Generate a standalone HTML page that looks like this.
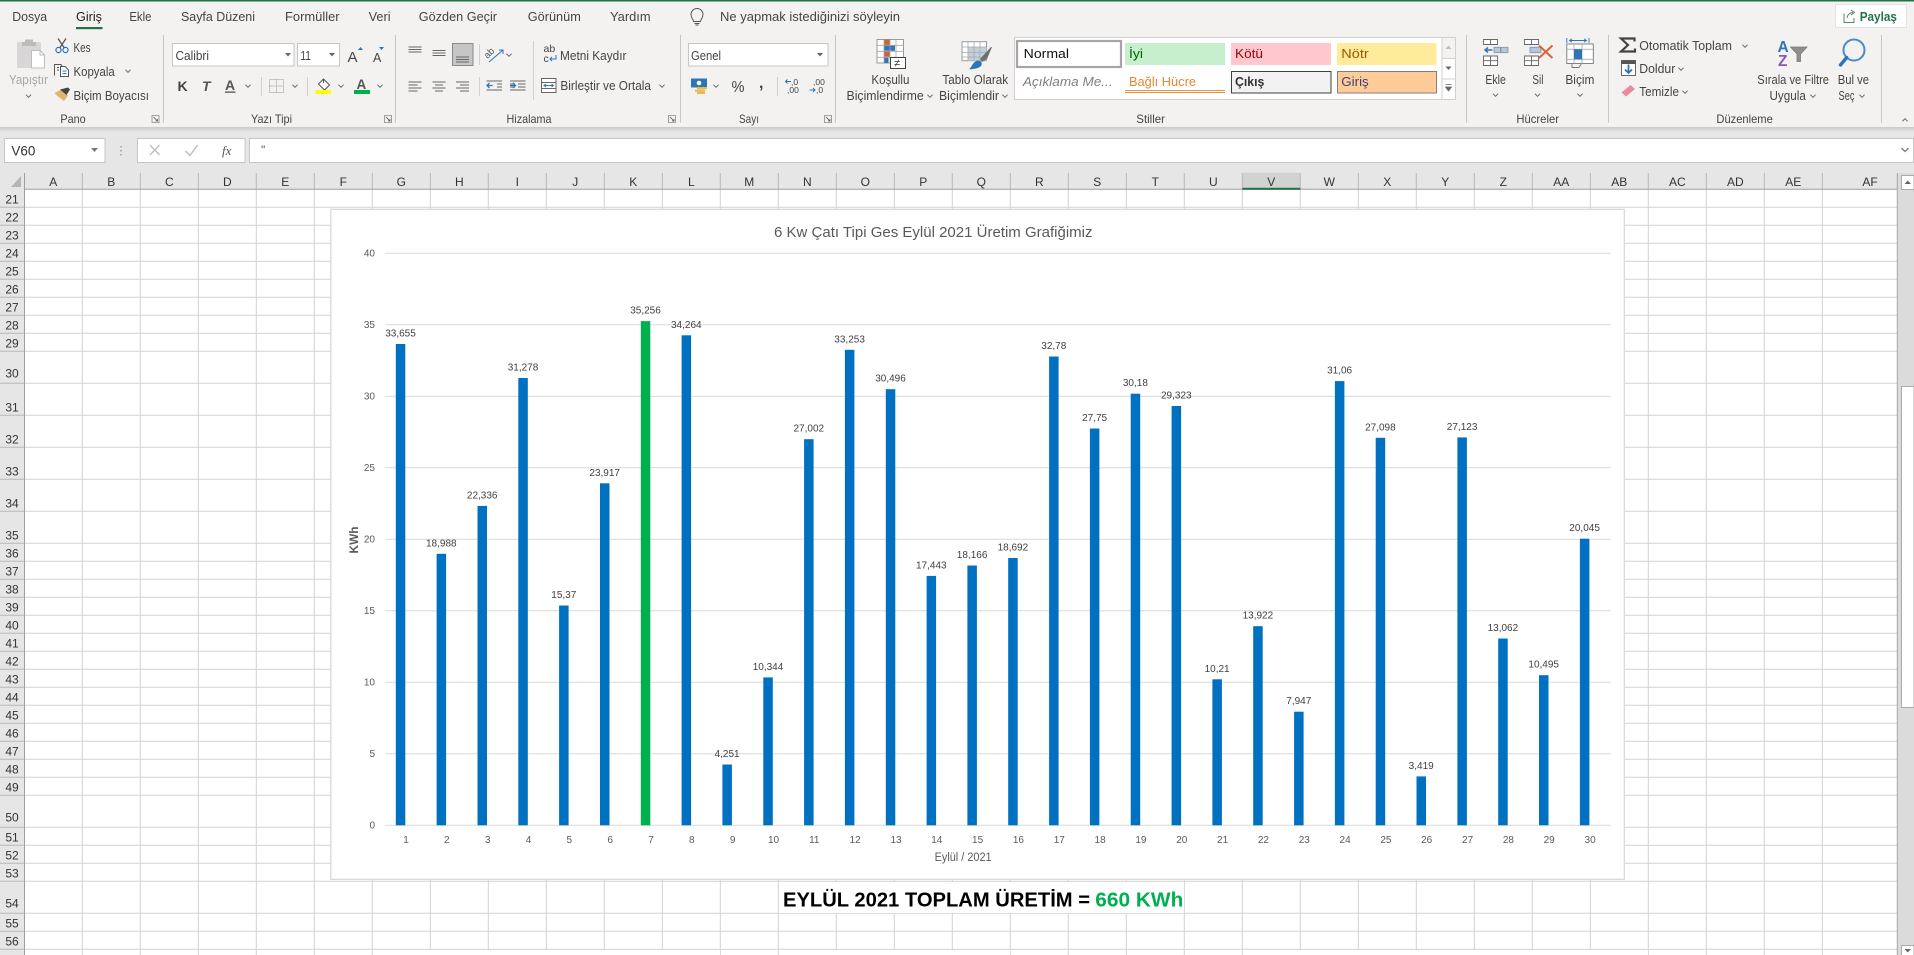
<!DOCTYPE html>
<html lang="tr">
<head>
<meta charset="utf-8">
<title>Excel</title>
<style>
html,body{margin:0;padding:0;width:1914px;height:955px;overflow:hidden;background:#fff}
svg{display:block}
text{font-family:"Liberation Sans",sans-serif;fill:#444;font-size:13px}
.h{font-size:12px;fill:#333}
.c{font-size:12px;fill:#333;text-anchor:middle}
.r{font-size:12px;fill:#333;text-anchor:middle}
.d{font-size:10px;fill:#404040;text-anchor:middle}
.y{font-size:10px;fill:#595959;text-anchor:end}
.x{font-size:10px;fill:#595959;text-anchor:middle}
</style>
</head>
<body>
<svg xmlns="http://www.w3.org/2000/svg" width="1914" height="955" viewBox="0 0 1914 955">
<defs>
<path id="ch" d="M-2.6-1.3 0 1.3 2.6-1.3" fill="none" stroke="#666" stroke-width="1"/>
<g id="dl"><path d="M-3.5-3.5H3.5V3.5H-3.5Z" fill="none" stroke="#8a8a8a" stroke-width=".8"/><path d="M-2-2 2 2M2 0V2H0" fill="none" stroke="#555" stroke-width=".8"/></g>
<linearGradient id="sh" x1="0" y1="0" x2="0" y2="1"><stop offset="0" stop-color="#c9c9c9"/><stop offset="1" stop-color="#e6e6e6"/></linearGradient>
</defs>

<!-- backgrounds -->
<rect width="1914" height="955" fill="#fff"/>
<rect width="1914" height="173" fill="#e6e6e6"/>
<rect width="1914" height="127" fill="#f3f2f1"/>
<rect y="127" width="1914" height="5" fill="url(#sh)"/>
<rect width="1914" height="1.5" fill="#217346"/>

<!-- tabs -->
<g>
<text x="12.2" y="21" textLength="35" lengthAdjust="spacingAndGlyphs">Dosya</text>
<text x="76" y="21" textLength="26" lengthAdjust="spacingAndGlyphs" style="fill:#222">Giriş</text>
<rect x="76" y="27" width="26.500" height="2.200" fill="#217346"/>
<text x="129.4" y="21" textLength="22" lengthAdjust="spacingAndGlyphs">Ekle</text>
<text x="181" y="21" textLength="74" lengthAdjust="spacingAndGlyphs">Sayfa Düzeni</text>
<text x="285" y="21" textLength="54.600" lengthAdjust="spacingAndGlyphs">Formüller</text>
<text x="368.6" y="21" textLength="22" lengthAdjust="spacingAndGlyphs">Veri</text>
<text x="418.8" y="21" textLength="78.200" lengthAdjust="spacingAndGlyphs">Gözden Geçir</text>
<text x="527.8" y="21" textLength="53" lengthAdjust="spacingAndGlyphs">Görünüm</text>
<text x="610" y="21" textLength="40.600" lengthAdjust="spacingAndGlyphs">Yardım</text>
<path d="M693.500 21.500c-.3-2.500-2.500-3.500-2.500-7a6 6 0 0 1 12 0c0 3.500-2.200 4.500-2.500 7ZM694.500 23.500h5M695.500 25h3" fill="none" stroke="#555" stroke-width="1"/>
<text x="720" y="21" textLength="180" lengthAdjust="spacingAndGlyphs">Ne yapmak istediğinizi söyleyin</text>
<rect x="1835.500" y="4.500" width="71" height="23" fill="#fff" stroke="#e3e3e3"/>
<path d="M1844 13.500V22.500H1854V18M1847 18c.5-3.500 3-5.500 6-5.500M1851 10l3.500 2.500-3.500 2.500" fill="none" stroke="#5f7f6c" stroke-width="1"/>
<text x="1859.700" y="21" textLength="37.200" lengthAdjust="spacingAndGlyphs" style="fill:#217346;font-weight:bold">Paylaş</text>
</g>

<!-- separators -->
<path d="M163.500 35V122.700M395.500 35V122.700M680.500 35V122.700M835.500 35V122.700M1466.500 35V122.700M1608.500 35V122.700M1881.500 35V122.700" stroke="#c8c6c4" stroke-width="1"/>
<path d="M261.500 77V96M307.500 77V96M479.500 44V65M479.500 77V96M533.500 41V100M777.500 77V96" stroke="#d2d0ce" stroke-width="1"/>

<!-- group labels -->
<g>
<text x="60.4" y="123" textLength="25.300" lengthAdjust="spacingAndGlyphs" style="font-size:12px">Pano</text>
<text x="251" y="123" textLength="41" lengthAdjust="spacingAndGlyphs" style="font-size:12px">Yazı Tipi</text>
<text x="506.500" y="123" textLength="45" lengthAdjust="spacingAndGlyphs" style="font-size:12px">Hizalama</text>
<text x="739" y="123" textLength="20" lengthAdjust="spacingAndGlyphs" style="font-size:12px">Sayı</text>
<text x="1136.300" y="123" textLength="28.700" lengthAdjust="spacingAndGlyphs" style="font-size:12px">Stiller</text>
<text x="1516.400" y="123" textLength="42.600" lengthAdjust="spacingAndGlyphs" style="font-size:12px">Hücreler</text>
<text x="1716.400" y="123" textLength="56.400" lengthAdjust="spacingAndGlyphs" style="font-size:12px">Düzenleme</text>
<use href="#dl" x="155.500" y="119"/><use href="#dl" x="388" y="119"/><use href="#dl" x="672" y="119"/><use href="#dl" x="828" y="119"/>
<use href="#ch" x="1905" y="120" transform="rotate(180 1905 120)"/>
</g>

<!-- clipboard group -->
<g>
<rect x="17" y="42" width="24" height="26" rx="1" fill="#d8d6d6"/>
<path d="M25 42V39.500H33V42H36V46H22V42Z" fill="#bdbbbb"/>
<path d="M31.500 50.500H40L44.500 55V68H31.500Z" fill="#fff" stroke="#bdbdbd"/>
<path d="M40 50.500V55H44.500" fill="none" stroke="#bdbdbd"/>
<text x="9" y="84" textLength="39" lengthAdjust="spacingAndGlyphs" style="fill:#a6a6a6">Yapıştır</text>
<use href="#ch" x="28.500" y="96"/>
<circle cx="58.500" cy="50" r="2.600" fill="none" stroke="#2e75b6" stroke-width="1.200"/>
<circle cx="65.500" cy="50" r="2.600" fill="none" stroke="#2e75b6" stroke-width="1.200"/>
<path d="M59.800 47.800 66 38.500M64.200 47.800 58 38.500" stroke="#555" stroke-width="1.300" fill="none"/>
<text x="73.500" y="52" textLength="17" lengthAdjust="spacingAndGlyphs">Kes</text>
<path d="M54.500 75.500V64.500H61L62 66M57 67.500H59M57 70H59" fill="none" stroke="#555"/>
<path d="M60.500 66.500H65L68.500 70V76.500H60.500Z" fill="#fff" stroke="#555"/>
<path d="M62.500 71H66.500M62.500 73.500H66.500" stroke="#2e75b6"/>
<text x="73.500" y="76" textLength="41.200" lengthAdjust="spacingAndGlyphs">Kopyala</text>
<use href="#ch" x="128" y="71"/>
<path d="M54.500 93 62 89 68 95.500 64 101C60 98 57 96 54.500 93Z" fill="#e0b46c"/>
<path d="M60 89.500 68 87.500 70 89.500 66.500 95Z" fill="#444"/>
<text x="73.500" y="100" textLength="75.500" lengthAdjust="spacingAndGlyphs">Biçim Boyacısı</text>
</g>

<!-- font group -->
<g>
<rect x="172.500" y="43.500" width="121.500" height="22.500" fill="#fff" stroke="#c6c6c6"/>
<text x="175.500" y="60" textLength="33.500" lengthAdjust="spacingAndGlyphs">Calibri</text>
<path d="M285 53H291L288 56.500Z" fill="#666"/>
<rect x="297.500" y="43.500" width="42" height="22.500" fill="#fff" stroke="#c6c6c6"/>
<text x="300.400" y="60" textLength="10.600" lengthAdjust="spacingAndGlyphs">11</text>
<path d="M329 53H335L332 56.500Z" fill="#666"/>
<text x="347.500" y="62" style="font-size:15px">A</text>
<path d="M358 50H363L360.500 47Z" fill="#2e75b6"/>
<text x="373" y="62" style="font-size:12.500px">A</text>
<path d="M379 47H384L381.500 50Z" fill="#2e75b6"/>
<text x="177.500" y="91" style="font-weight:bold;font-size:14px">K</text>
<text x="202" y="91" style="font-style:italic;font-weight:bold;font-size:14px;fill:#555">T</text>
<text x="225" y="90" style="font-size:14px;font-weight:bold;fill:#555">A</text>
<rect x="225" y="91.500" width="10.500" height="1.200" fill="#444"/>
<use href="#ch" x="248" y="86"/>
<rect x="269.500" y="79.500" width="14" height="13" fill="none" stroke="#9a9a9a" stroke-dasharray="1 1"/>
<path d="M276.500 79.500V92.500M269.500 86H283.500" stroke="#9a9a9a" stroke-dasharray="1 1"/>
<use href="#ch" x="295" y="86"/>
<path d="M323.500 79 329.500 85 324.500 90 318.500 84Z" fill="#fff" stroke="#555"/>
<path d="M323.500 79V83" stroke="#555"/>
<rect x="315.500" y="90" width="15.500" height="4" fill="#ffff00"/>
<use href="#ch" x="341" y="86"/>
<text x="356.500" y="89" style="font-size:13.500px;font-weight:bold;fill:#555">A</text>
<rect x="354" y="90" width="16" height="4" fill="#00b050"/>
<use href="#ch" x="380" y="86"/>
</g>

<!-- alignment group -->
<g>
<rect x="452.500" y="43.500" width="20.500" height="22" fill="#c6c6c6" stroke="#8a8a8a"/>
<path d="M408.500 47H421.500M408.500 49.500H421.500M408.500 52H421.500M432.500 50.500H445.500M432.500 53H445.500M432.500 55.500H445.500M456 57H469M456 59.500H469M456 62H469" stroke="#666" stroke-width="1"/>
<path d="M408.500 82H421.500M408.500 85H417.500M408.500 88H421.500M408.500 91H417.500M432.500 82H445.500M435 85H443M432.500 88H445.500M435 91H443M456 82H469M460 85H469M456 88H469M460 91H469" stroke="#666" stroke-width="1"/>
<text x="0" y="0" transform="translate(487.500 59) rotate(-45)" style="font-size:9.500px;fill:#555">ab</text>
<path d="M489 62 503 50M499 50H503V54" fill="none" stroke="#2e75b6" stroke-width="1"/>
<use href="#ch" x="509" y="55"/>
<path d="M494 81H502M497 84H502M497 87H502M494 90H502M510 81H518M510 84H515M510 87H515M510 90H518M518 81H525.500M518 90H525.500M518 84H525.500M518 87H525.500M486.500 81H494M486.500 90H494" stroke="#666" stroke-width="1"/>
<path d="M492.500 85.500H487M489.500 83 487 85.500 489.500 88" fill="none" stroke="#2e75b6" stroke-width="1.300"/>
<path d="M510 85.500H515.500M513 83 515.500 85.500 513 88" fill="none" stroke="#2e75b6" stroke-width="1.300"/>
<text x="543.500" y="52" style="font-size:10.500px;fill:#444">ab</text>
<text x="543.500" y="62" style="font-size:10.500px;fill:#444">c</text>
<path d="M556 55V59H550M552 57 550 59 552 61" fill="none" stroke="#2e75b6" stroke-width="1"/>
<text x="560" y="60" textLength="66.500" lengthAdjust="spacingAndGlyphs">Metni Kaydır</text>
<rect x="541.500" y="78.500" width="14.500" height="14" fill="#fff" stroke="#666"/>
<path d="M541.500 82.500H556M541.500 88.500H556" stroke="#666"/>
<path d="M544 85.500H553.500M546 84 544 85.500 546 87M551.500 84 553.500 85.500 551.500 87" fill="none" stroke="#2e75b6"/>
<text x="560.400" y="90" textLength="90.600" lengthAdjust="spacingAndGlyphs">Birleştir ve Ortala</text>
<use href="#ch" x="662" y="86"/>
</g>

<!-- number group -->
<g>
<rect x="688.500" y="43.500" width="139.500" height="22.500" fill="#fff" stroke="#c6c6c6"/>
<text x="691" y="60" textLength="30" lengthAdjust="spacingAndGlyphs">Genel</text>
<path d="M817 53H823L820 56.500Z" fill="#666"/>
<rect x="691" y="78.500" width="16" height="9" fill="#2e75b6"/>
<circle cx="699" cy="83" r="2.300" fill="#fff"/>
<rect x="697" y="87" width="10" height="2.200" fill="#e8b84a"/>
<rect x="695" y="89.600" width="10" height="2.200" fill="#e8b84a"/>
<rect x="697" y="92" width="8" height="2" fill="#e8b84a"/>
<use href="#ch" x="716" y="86"/>
<text x="731.500" y="92" textLength="13" lengthAdjust="spacingAndGlyphs" style="font-size:16px">%</text>
<text x="759" y="88" style="font-size:16px;font-weight:bold">,</text>
<text x="791" y="85" style="font-size:8.500px">,0</text>
<text x="787" y="93" style="font-size:8.500px">,00</text>
<path d="M791 81.500H785.500M787.500 79.500 785.500 81.500 787.500 83.500" fill="none" stroke="#2e75b6"/>
<text x="813" y="85" style="font-size:8.500px">,00</text>
<text x="816" y="93" style="font-size:8.500px">,0</text>
<path d="M809.500 90H815M813 88 815 90 813 92" fill="none" stroke="#2e75b6"/>
</g>

<!-- conditional / table format -->
<g>
<rect x="877" y="39.500" width="26.500" height="23.500" fill="#fff" stroke="#9a9a9a"/>
<rect x="884" y="39.500" width="6" height="5.500" fill="#d0603b"/>
<rect x="884" y="45.300" width="11" height="5.500" fill="#2e75b6"/>
<rect x="884" y="51.300" width="6" height="5.500" fill="#d0603b"/>
<rect x="884" y="57.300" width="4.500" height="5.700" fill="#2e75b6"/>
<path d="M877 45.300H903.500M877 51.300H903.500M877 57.300H903.500M884 39.500V63M890 39.500V63M896 39.500V63" stroke="#a8a8a8" stroke-width=".8" fill="none"/>
<rect x="890.500" y="57.500" width="15" height="11" fill="#fff" stroke="#444"/>
<text x="894" y="66.500" style="font-size:11px;fill:#333">≠</text>
<text x="871.400" y="84" textLength="38" lengthAdjust="spacingAndGlyphs">Koşullu</text>
<text x="846.500" y="100" textLength="77.200" lengthAdjust="spacingAndGlyphs">Biçimlendirme</text>
<use href="#ch" x="930" y="96"/>
<rect x="962" y="41.700" width="24.500" height="19" fill="#fff" stroke="#9a9a9a"/>
<rect x="968" y="47" width="18.500" height="13.700" fill="#c3d0de"/>
<path d="M962 47H986.500M962 52.500H986.500M962 57H986.500M968 41.700V60.700M974 41.700V60.700M980 41.700V60.700" stroke="#a8a8a8" stroke-width=".8" fill="none"/>
<path d="M980 59 991 47 992 47 987 59 982 62Z" fill="#6f6f6f"/>
<path d="M977 60.500C981 60 983 63 981 66 978 69 972 69.300 969 69.300 972 67 972 63 977 60.500Z" fill="#2e75b6"/>
<text x="942.400" y="84" textLength="65.700" lengthAdjust="spacingAndGlyphs">Tablo Olarak</text>
<text x="939" y="100" textLength="60" lengthAdjust="spacingAndGlyphs">Biçimlendir</text>
<use href="#ch" x="1005" y="96"/>
</g>

<!-- styles gallery -->
<g>
<rect x="1014.500" y="37.500" width="441" height="62" fill="#fff" stroke="#d2d0ce"/>
<rect x="1017" y="41" width="104" height="26" fill="#fff" stroke="#a6a6a6" stroke-width="2.200"/>
<text x="1023.700" y="58" textLength="45.300" lengthAdjust="spacingAndGlyphs" style="fill:#111">Normal</text>
<rect x="1125" y="43" width="100" height="22" fill="#c6efce"/>
<text x="1129" y="58" textLength="14" lengthAdjust="spacingAndGlyphs" style="fill:#006100">İyi</text>
<rect x="1231" y="43" width="100" height="22" fill="#ffc7ce"/>
<text x="1235" y="58" textLength="28" lengthAdjust="spacingAndGlyphs" style="fill:#9c0006">Kötü</text>
<rect x="1337" y="43" width="99.500" height="22" fill="#ffeb9c"/>
<text x="1341.300" y="58" textLength="27.400" lengthAdjust="spacingAndGlyphs" style="fill:#9c5700">Nötr</text>
<text x="1022.900" y="86" textLength="89.700" lengthAdjust="spacingAndGlyphs" style="fill:#7f7f7f;font-style:italic">Açıklama Me...</text>
<text x="1129" y="86" textLength="67" lengthAdjust="spacingAndGlyphs" style="fill:#e5882e">Bağlı Hücre</text>
<path d="M1125 90.500H1225M1125 92.500H1225" stroke="#e5933f" stroke-width="1"/>
<rect x="1231.500" y="71.500" width="99.500" height="21.500" fill="#f2f2f2" stroke="#3f3f3f"/>
<text x="1235" y="86" textLength="29.400" lengthAdjust="spacingAndGlyphs" style="fill:#333;font-weight:bold">Çıkış</text>
<rect x="1337.500" y="71.500" width="99" height="21.500" fill="#ffcc99" stroke="#7f7f7f"/>
<text x="1341.300" y="86" textLength="27.400" lengthAdjust="spacingAndGlyphs" style="fill:#3f3f76">Giriş</text>
<rect x="1442" y="37.500" width="13.500" height="21" fill="#f3f2f1" stroke="#d2d0ce"/>
<rect x="1442" y="58.500" width="13.500" height="20.500" fill="#fff" stroke="#d2d0ce"/>
<rect x="1442" y="79" width="13.500" height="20.500" fill="#fff" stroke="#d2d0ce"/>
<path d="M1445.500 49H1451.500L1448.500 45.500Z" fill="#bdbdbd"/>
<path d="M1445.500 66.500H1451.500L1448.500 70Z" fill="#666"/>
<path d="M1445.500 84.500H1451.500M1445.500 87H1451.500L1448.500 91Z" stroke="#666" fill="#666" stroke-width=".8"/>
</g>

<!-- cells group -->
<g>
<path d="M1483.500 39.500H1497.500V44.500H1483.500ZM1490.500 39.500V44.500M1483.500 56H1497.500V65.500H1483.500ZM1490.500 56V65.500M1483.500 60.700H1497.500" fill="#fff" stroke="#666" stroke-width=".9"/>
<rect x="1494" y="47.300" width="6.600" height="5.400" fill="#b7c7d8" stroke="#7f93a8" stroke-width=".8"/>
<rect x="1501" y="47.300" width="7" height="5.400" fill="#b7c7d8" stroke="#7f93a8" stroke-width=".8"/>
<path d="M1492.500 50H1485M1488 47.500 1485 50 1488 52.500" fill="none" stroke="#2e75b6" stroke-width="1.500"/>
<text x="1485.400" y="84" textLength="20.400" lengthAdjust="spacingAndGlyphs">Ekle</text>
<use href="#ch" x="1495.500" y="95"/>
<path d="M1524.500 39.500H1538.500V44.500H1524.500ZM1531.500 39.500V44.500M1524.500 56H1538.500V65.500H1524.500ZM1531.500 56V65.500M1524.500 60.700H1538.500" fill="#fff" stroke="#666" stroke-width=".9"/>
<rect x="1530" y="47.300" width="11" height="5.400" fill="#b7c7d8" stroke="#7f93a8" stroke-width=".8"/>
<path d="M1539 45.500 1552.500 58M1552.500 45.500 1539 58" stroke="#d9633b" stroke-width="2"/>
<text x="1532.400" y="84" textLength="11" lengthAdjust="spacingAndGlyphs">Sil</text>
<use href="#ch" x="1537.500" y="95"/>
<path d="M1570 40.500H1586M1572 38.800 1569.500 40.500 1572 42.200M1584 38.800 1586.500 40.500 1584 42.200M1566.800 38V43M1589 38V43" fill="none" stroke="#2e75b6" stroke-width=".9"/>
<rect x="1566.800" y="44" width="26.500" height="19.500" fill="#fff" stroke="#777" stroke-width=".9"/>
<path d="M1574 44V63.500M1582 44V63.500M1566.800 49.300H1593.300M1566.800 59.300H1593.300" stroke="#a8a8a8" stroke-width=".8"/>
<rect x="1574" y="49.300" width="8" height="10" fill="#2e75b6"/>
<path d="M1572 63.500V67.500H1579L1581.500 63.500" fill="none" stroke="#777" stroke-width=".9"/>
<text x="1565.400" y="84" textLength="29" lengthAdjust="spacingAndGlyphs">Biçim</text>
<use href="#ch" x="1580" y="95"/>
</g>

<!-- editing group -->
<g>
<path d="M1634.500 41.500V38.500H1621L1628 45 1621 51.500H1635V48.500" fill="none" stroke="#444" stroke-width="2.200"/>
<text x="1639.300" y="50" textLength="92.700" lengthAdjust="spacingAndGlyphs">Otomatik Toplam</text>
<use href="#ch" x="1745" y="46"/>
<rect x="1621.500" y="60.500" width="14" height="15" fill="#fff" stroke="#666"/>
<rect x="1621.500" y="60.500" width="14" height="3.500" fill="#555"/>
<path d="M1628.500 64.500V73M1625 69.500 1628.500 73 1632 69.500" fill="none" stroke="#2e75b6" stroke-width="1.800"/>
<text x="1639.300" y="73" textLength="36" lengthAdjust="spacingAndGlyphs">Doldur</text>
<use href="#ch" x="1681" y="69"/>
<path d="M1621.500 92.500 1630.500 85 1635 89 1626 96.500Z" fill="#e88b9c"/>
<text x="1639.300" y="96" textLength="39.700" lengthAdjust="spacingAndGlyphs">Temizle</text>
<use href="#ch" x="1685" y="92"/>
<text x="1777.500" y="52" style="font-size:15.500px;font-weight:bold;fill:#2e75b6">A</text>
<text x="1778" y="66" style="font-size:15.500px;font-weight:bold;fill:#8a56b8">Z</text>
<path d="M1790.500 47H1807L1800.500 54V61.500H1797V54Z" fill="#8f8f8f" stroke="#777" stroke-width=".8"/>
<text x="1757.300" y="84" textLength="71.700" lengthAdjust="spacingAndGlyphs">Sırala ve Filtre</text>
<text x="1769.500" y="100" textLength="36.300" lengthAdjust="spacingAndGlyphs">Uygula</text>
<use href="#ch" x="1813" y="96"/>
<circle cx="1854" cy="50" r="10.500" fill="none" stroke="#4a8bc9" stroke-width="2"/>
<path d="M1846.700 57.500 1840.500 65" stroke="#2e75b6" stroke-width="3.400" stroke-linecap="round"/>
<text x="1837.700" y="84" textLength="31.400" lengthAdjust="spacingAndGlyphs">Bul ve</text>
<text x="1838.500" y="100" textLength="16" lengthAdjust="spacingAndGlyphs">Seç</text>
<use href="#ch" x="1862" y="96"/>
</g>

<!-- formula bar -->
<g>
<rect x="4.500" y="138.500" width="100.500" height="24" fill="#fff" stroke="#c6c6c6"/>
<text x="11.400" y="155.500" textLength="24" lengthAdjust="spacingAndGlyphs" style="font-size:14px;fill:#333">V60</text>
<path d="M91 148H98L94.500 152Z" fill="#777"/>
<path d="M121 146V147.500M121 150V151.500M121 154V155.500" stroke="#a0a0a0" stroke-width="1.500"/>
<rect x="137.500" y="138.500" width="107.500" height="24" fill="#fff" stroke="#c6c6c6"/>
<path d="M150 145 159.500 155M159.500 145 150 155" stroke="#bdbdbd" stroke-width="1.300"/>
<path d="M185.500 151 190 155.500 197.500 145" fill="none" stroke="#bdbdbd" stroke-width="1.500"/>
<text x="222" y="155" style="font-family:'Liberation Serif',serif;font-style:italic;font-size:13px;fill:#555">fx</text>
<rect x="249.500" y="138.500" width="1664" height="24" fill="#fff" stroke="#c6c6c6"/>
<text x="261" y="154" style="font-size:12px;fill:#555">"</text>
<path d="M1901.500 148 1905 151.500 1908.500 148" fill="none" stroke="#777" stroke-width="1.300"/>
</g>

<!-- sheet gridlines -->
<path stroke="#d2d2d2" stroke-width="1" fill="none" d="M24 207.300H1897M24 225.300H1897M24 243.300H1897M24 261.300H1897M24 279.300H1897M24 297.300H1897M24 315.300H1897M24 333.300H1897M24 351.300H1897M24 383.300H1897M24 415.300H1897M24 447.300H1897M24 479.300H1897M24 511.300H1897M24 543.300H1897M24 561.300H1897M24 579.300H1897M24 597.300H1897M24 615.300H1897M24 633.300H1897M24 651.300H1897M24 669.300H1897M24 687.300H1897M24 705.300H1897M24 723.300H1897M24 741.300H1897M24 759.300H1897M24 777.300H1897M24 795.300H1897M24 827.300H1897M24 845.300H1897M24 863.300H1897M24 881.300H1897M24 913.300H1897M24 931.300H1897M24 949.300H1897
M82.300 189V955M140.300 189V955M198.300 189V955M256.300 189V955M314.300 189V955M372.300 189V955M430.300 189V955M488.300 189V955M546.300 189V955M604.300 189V955M662.300 189V955M720.300 189V955M778.300 189V955M836.300 189V955M894.300 189V955M952.300 189V955M1010.300 189V955M1068.300 189V955M1126.300 189V955M1184.300 189V955M1242.300 189V955M1300.300 189V955M1358.300 189V955M1416.300 189V955M1474.300 189V955M1532.300 189V955M1590.300 189V955M1648.300 189V955M1706.300 189V955M1764.300 189V955M1822.300 189V955"/>
<!-- merged areas -->
<rect x="779" y="882" width="405" height="31" fill="#fff"/>
<rect x="373" y="950" width="347" height="5" fill="#fff"/>
<rect x="779" y="950" width="231" height="5" fill="#fff"/>
<rect x="1243" y="950" width="405" height="5" fill="#fff"/>

<!-- column headers -->
<rect x="0" y="172.700" width="1897" height="16.300" fill="#e6e6e6"/>
<rect x="1242.300" y="172.700" width="58" height="16.300" fill="#d2d2d2"/>
<path d="M24.500 173V189M82.300 173V189M140.300 173V189M198.300 173V189M256.300 173V189M314.300 173V189M372.300 173V189M430.300 173V189M488.300 173V189M546.300 173V189M604.300 173V189M662.300 173V189M720.300 173V189M778.300 173V189M836.300 173V189M894.300 173V189M952.300 173V189M1010.300 173V189M1068.300 173V189M1126.300 173V189M1184.300 173V189M1242.300 173V189M1300.300 173V189M1358.300 173V189M1416.300 173V189M1474.300 173V189M1532.300 173V189M1590.300 173V189M1648.300 173V189M1706.300 173V189M1764.300 173V189M1822.300 173V189" stroke="#b8b8b8" stroke-width="1"/>
<path d="M24 189.300H1897" stroke="#9f9f9f" stroke-width="1"/>
<rect x="1242.300" y="187.800" width="58" height="2" fill="#217346"/>
<path d="M21 176V187H11Z" fill="#b5b5b5"/>
<g>
<text class="c" x="53.300" y="186">A</text><text class="c" x="111.300" y="186">B</text><text class="c" x="169.300" y="186">C</text><text class="c" x="227.300" y="186">D</text><text class="c" x="285.300" y="186">E</text><text class="c" x="343.300" y="186">F</text><text class="c" x="401.300" y="186">G</text><text class="c" x="459.300" y="186">H</text><text class="c" x="517.300" y="186">I</text><text class="c" x="575.300" y="186">J</text><text class="c" x="633.300" y="186">K</text><text class="c" x="691.300" y="186">L</text><text class="c" x="749.300" y="186">M</text><text class="c" x="807.300" y="186">N</text><text class="c" x="865.300" y="186">O</text><text class="c" x="923.300" y="186">P</text><text class="c" x="981.300" y="186">Q</text><text class="c" x="1039.300" y="186">R</text><text class="c" x="1097.300" y="186">S</text><text class="c" x="1155.300" y="186">T</text><text class="c" x="1213.300" y="186">U</text><text class="c" x="1271.300" y="186">V</text><text class="c" x="1329.300" y="186">W</text><text class="c" x="1387.300" y="186">X</text><text class="c" x="1445.300" y="186">Y</text><text class="c" x="1503.300" y="186">Z</text><text class="c" x="1561.300" y="186">AA</text><text class="c" x="1619.300" y="186">AB</text><text class="c" x="1677.300" y="186">AC</text><text class="c" x="1735.300" y="186">AD</text><text class="c" x="1793.300" y="186">AE</text><text class="c" x="1870" y="186">AF</text>
</g>

<!-- row headers -->
<rect x="0" y="189" width="24.500" height="766" fill="#e6e6e6"/>
<path stroke="#b8b8b8" stroke-width="1" d="M0 207.300H24M0 225.300H24M0 243.300H24M0 261.300H24M0 279.300H24M0 297.300H24M0 315.300H24M0 333.300H24M0 351.300H24M0 383.300H24M0 415.300H24M0 447.300H24M0 479.300H24M0 511.300H24M0 543.300H24M0 561.300H24M0 579.300H24M0 597.300H24M0 615.300H24M0 633.300H24M0 651.300H24M0 669.300H24M0 687.300H24M0 705.300H24M0 723.300H24M0 741.300H24M0 759.300H24M0 777.300H24M0 795.300H24M0 827.300H24M0 845.300H24M0 863.300H24M0 881.300H24M0 913.300H24M0 931.300H24M0 949.300H24"/>
<path d="M24.500 173V955" stroke="#9f9f9f" stroke-width="1"/>
<g>
<text class="r" x="12" y="203.300">21</text><text class="r" x="12" y="221.300">22</text><text class="r" x="12" y="239.300">23</text><text class="r" x="12" y="257.300">24</text><text class="r" x="12" y="275.300">25</text><text class="r" x="12" y="293.300">26</text><text class="r" x="12" y="311.300">27</text><text class="r" x="12" y="329.300">28</text><text class="r" x="12" y="347.300">29</text><text class="r" x="12" y="377.300">30</text><text class="r" x="12" y="411.300">31</text><text class="r" x="12" y="443.300">32</text><text class="r" x="12" y="475.300">33</text><text class="r" x="12" y="507.300">34</text><text class="r" x="12" y="539.300">35</text><text class="r" x="12" y="557.300">36</text><text class="r" x="12" y="575.300">37</text><text class="r" x="12" y="593.300">38</text><text class="r" x="12" y="611.300">39</text><text class="r" x="12" y="629.300">40</text><text class="r" x="12" y="647.300">41</text><text class="r" x="12" y="665.300">42</text><text class="r" x="12" y="683.300">43</text><text class="r" x="12" y="701.300">44</text><text class="r" x="12" y="719.300">45</text><text class="r" x="12" y="737.300">46</text><text class="r" x="12" y="755.300">47</text><text class="r" x="12" y="773.300">48</text><text class="r" x="12" y="791.300">49</text><text class="r" x="12" y="821.300">50</text><text class="r" x="12" y="841.300">51</text><text class="r" x="12" y="859.300">52</text><text class="r" x="12" y="877.300">53</text><text class="r" x="12" y="907.300">54</text><text class="r" x="12" y="927.300">55</text><text class="r" x="12" y="945.300">56</text>
</g>

<!-- scrollbar -->
<path d="M1897.300 173V955" stroke="#9f9f9f" stroke-width="1"/>
<rect x="1898" y="173" width="16" height="782" fill="#dbdbdb"/>
<rect x="1901.500" y="175.500" width="12.500" height="14" fill="#fff" stroke="#ababab"/>
<path d="M1904.500 184H1911L1907.700 180.500Z" fill="#666"/>
<rect x="1901.500" y="386.500" width="12.500" height="321" fill="#fff" stroke="#ababab"/>
<rect x="1901.500" y="945.500" width="12.500" height="10" fill="#fff" stroke="#ababab"/>
<path d="M1904.500 949H1911L1907.700 952.500Z" fill="#666"/>

<!-- chart -->
<rect x="330.800" y="209.300" width="1293.500" height="670" fill="#fff" stroke="#d9d9d9" stroke-width="1.300"/>
<text x="774" y="237" textLength="318.500" lengthAdjust="spacingAndGlyphs" style="font-size:15px;fill:#595959">6 Kw Çatı Tipi Ges Eylül 2021 Üretim Grafiğimiz</text>
<path stroke="#d9d9d9" stroke-width="1" d="M385.300 253.300H1610.700M385.300 324.800H1610.700M385.300 396.300H1610.700M385.300 467.800H1610.700M385.300 539.300H1610.700M385.300 610.800H1610.700M385.300 682.300H1610.700M385.300 753.800H1610.700M385.300 825.300H1610.700"/>
<g>
<text class="y" x="375" y="256.300">40</text><text class="y" x="375" y="327.800">35</text><text class="y" x="375" y="399.300">30</text><text class="y" x="375" y="470.800">25</text><text class="y" x="375" y="542.300">20</text><text class="y" x="375" y="613.800">15</text><text class="y" x="375" y="685.300">10</text><text class="y" x="375" y="756.800">5</text><text class="y" x="375" y="828.300">0</text>
</g>
<text x="0" y="0" transform="translate(358 553.500) rotate(-90)" textLength="27" lengthAdjust="spacingAndGlyphs" style="font-size:11.500px;font-weight:bold;fill:#595959">KWh</text>
<g fill="#0070c0">
<rect x="395.800" y="344" width="9.500" height="481.300"/>
<rect x="436.600" y="553.800" width="9.500" height="271.500"/>
<rect x="477.500" y="505.900" width="9.500" height="319.400"/>
<rect x="518.300" y="378" width="9.500" height="447.300"/>
<rect x="559.100" y="605.500" width="9.500" height="219.800"/>
<rect x="600" y="483.300" width="9.500" height="342"/>
<rect x="640.800" y="321.100" width="9.500" height="504.200" fill="#00b050"/>
<rect x="681.600" y="335.300" width="9.500" height="490"/>
<rect x="722.400" y="764.500" width="9.500" height="60.800"/>
<rect x="763.300" y="677.400" width="9.500" height="147.900"/>
<rect x="804.100" y="439.200" width="9.500" height="386.100"/>
<rect x="844.900" y="349.800" width="9.500" height="475.500"/>
<rect x="885.800" y="389.200" width="9.500" height="436.100"/>
<rect x="926.600" y="575.900" width="9.500" height="249.400"/>
<rect x="967.400" y="565.500" width="9.500" height="259.800"/>
<rect x="1008.200" y="558" width="9.500" height="267.300"/>
<rect x="1049.100" y="356.500" width="9.500" height="468.800"/>
<rect x="1089.900" y="428.500" width="9.500" height="396.800"/>
<rect x="1130.700" y="393.700" width="9.500" height="431.600"/>
<rect x="1171.600" y="406" width="9.500" height="419.300"/>
<rect x="1212.400" y="679.300" width="9.500" height="146"/>
<rect x="1253.200" y="626.200" width="9.500" height="199.100"/>
<rect x="1294.100" y="711.700" width="9.500" height="113.600"/>
<rect x="1334.900" y="381.100" width="9.500" height="444.200"/>
<rect x="1375.700" y="437.800" width="9.500" height="387.500"/>
<rect x="1416.500" y="776.400" width="9.500" height="48.900"/>
<rect x="1457.400" y="437.400" width="9.500" height="387.900"/>
<rect x="1498.200" y="638.500" width="9.500" height="186.800"/>
<rect x="1539" y="675.200" width="9.500" height="150.100"/>
<rect x="1579.900" y="538.700" width="9.500" height="286.600"/>
</g>
<g>
<text class="d" x="400.500" y="336.500">33,655</text>
<text class="d" x="441.300" y="546.300">18,988</text>
<text class="d" x="482.200" y="498.400">22,336</text>
<text class="d" x="523" y="370.500">31,278</text>
<text class="d" x="563.800" y="598">15,37</text>
<text class="d" x="604.700" y="475.800">23,917</text>
<text class="d" x="645.500" y="313.600">35,256</text>
<text class="d" x="686.300" y="327.800">34,264</text>
<text class="d" x="727.100" y="757">4,251</text>
<text class="d" x="768" y="669.900">10,344</text>
<text class="d" x="808.800" y="431.700">27,002</text>
<text class="d" x="849.600" y="342.300">33,253</text>
<text class="d" x="890.500" y="381.700">30,496</text>
<text class="d" x="931.300" y="568.400">17,443</text>
<text class="d" x="972.100" y="558">18,166</text>
<text class="d" x="1012.900" y="550.500">18,692</text>
<text class="d" x="1053.800" y="349">32,78</text>
<text class="d" x="1094.600" y="421">27,75</text>
<text class="d" x="1135.400" y="386.200">30,18</text>
<text class="d" x="1176.300" y="398.500">29,323</text>
<text class="d" x="1217.100" y="671.800">10,21</text>
<text class="d" x="1257.900" y="618.700">13,922</text>
<text class="d" x="1298.800" y="704.200">7,947</text>
<text class="d" x="1339.600" y="373.600">31,06</text>
<text class="d" x="1380.400" y="430.300">27,098</text>
<text class="d" x="1421.200" y="768.900">3,419</text>
<text class="d" x="1462.100" y="429.900">27,123</text>
<text class="d" x="1502.900" y="631">13,062</text>
<text class="d" x="1543.700" y="667.700">10,495</text>
<text class="d" x="1584.600" y="531.200">20,045</text>
</g>
<g>
<text class="x" x="406" y="843">1</text><text class="x" x="446.800" y="843">2</text><text class="x" x="487.700" y="843">3</text><text class="x" x="528.500" y="843">4</text><text class="x" x="569.300" y="843">5</text><text class="x" x="610.200" y="843">6</text><text class="x" x="651" y="843">7</text><text class="x" x="691.800" y="843">8</text><text class="x" x="732.600" y="843">9</text><text class="x" x="773.500" y="843">10</text><text class="x" x="814.300" y="843">11</text><text class="x" x="855.100" y="843">12</text><text class="x" x="896" y="843">13</text><text class="x" x="936.800" y="843">14</text><text class="x" x="977.600" y="843">15</text><text class="x" x="1018.400" y="843">16</text><text class="x" x="1059.300" y="843">17</text><text class="x" x="1100.100" y="843">18</text><text class="x" x="1140.900" y="843">19</text><text class="x" x="1181.800" y="843">20</text><text class="x" x="1222.600" y="843">21</text><text class="x" x="1263.400" y="843">22</text><text class="x" x="1304.300" y="843">23</text><text class="x" x="1345.100" y="843">24</text><text class="x" x="1385.900" y="843">25</text><text class="x" x="1426.700" y="843">26</text><text class="x" x="1467.600" y="843">27</text><text class="x" x="1508.400" y="843">28</text><text class="x" x="1549.200" y="843">29</text><text class="x" x="1590.100" y="843">30</text>
</g>
<text x="934.600" y="861" textLength="57" lengthAdjust="spacingAndGlyphs" style="font-size:11.500px;fill:#595959">Eylül / 2021</text>

<!-- total -->
<text x="783" y="906.500" textLength="307" lengthAdjust="spacingAndGlyphs" style="font-size:20.500px;font-weight:bold;fill:#000">EYLÜL 2021 TOPLAM ÜRETİM =</text>
<text x="1095.300" y="906.500" textLength="88" lengthAdjust="spacingAndGlyphs" style="font-size:20.500px;font-weight:bold;fill:#00b050">660 KWh</text>
</svg>
</body>
</html>
